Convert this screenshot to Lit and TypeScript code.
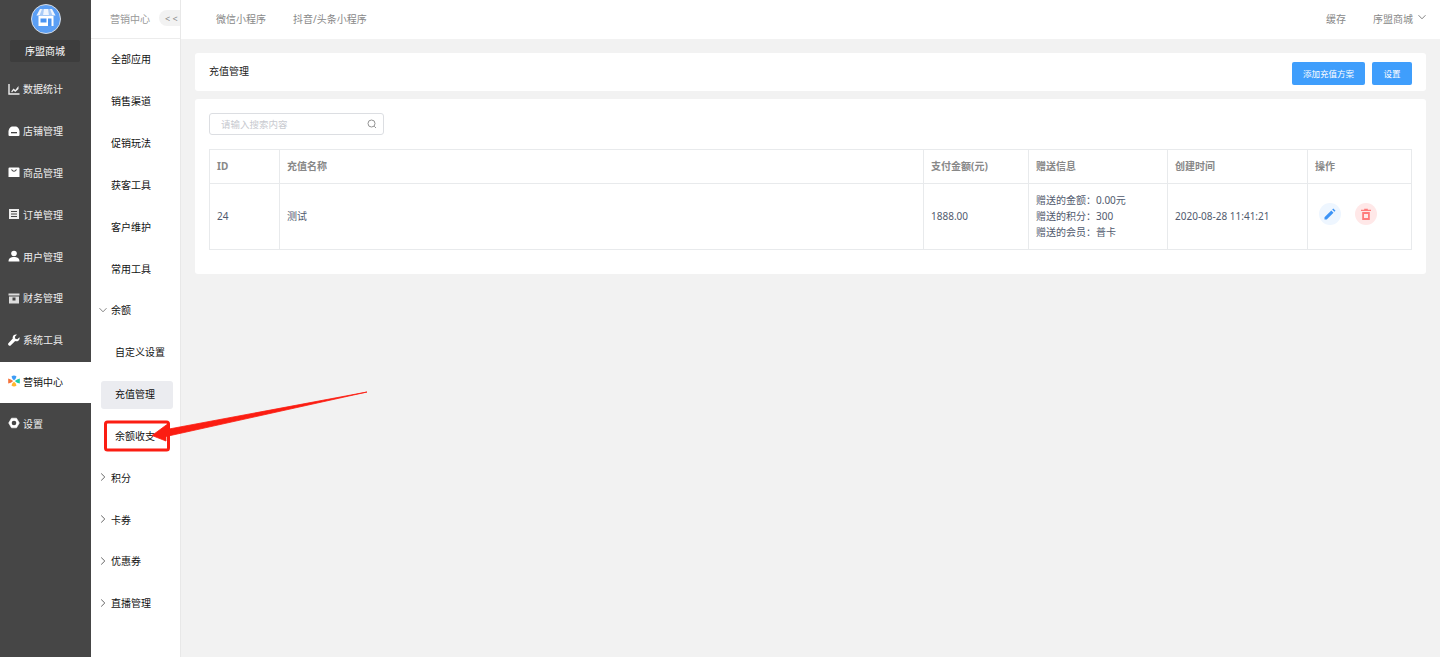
import { LitElement, html, css, svg } from "lit";
import { customElement } from "lit/decorators.js";

const icons: Record<string, any> = {
  stats: svg`<path d="M1 1V11h10.500" fill="none" stroke="#eee" stroke-width="1.400"/><path d="M3.200 8.500 5.500 5.500l1.800 1.500 3.200-4v3L7.300 9 5.500 7.500 4 9.500z" fill="#eee"/>`,
  shop: svg`<path d="M3.800 1.500h4.400c2 .8 3.300 2.800 3.300 5V10a1 1 0 0 1-1 1H1.500a1 1 0 0 1-1-1V6.500c0-2.200 1.300-4.200 3.300-5z" fill="#fff"/><rect x="3" y="7" width="6" height="1.300" fill="#464646"/>`,
  goods: svg`<path d="M1.500 1.500h9a1 1 0 0 1 1 1v8.500H.5V2.500a1 1 0 0 1 1-1z" fill="#fff"/><path d="M3.500 3.500q2.500 3.500 5 0" fill="none" stroke="#464646" stroke-width="1.200"/>`,
  order: svg`<path d="M1 1h10v10H1z" fill="#eee"/><path d="M3 3.500h6M3 6h6M3 8.500h6" stroke="#464646" stroke-width="1.100"/>`,
  user: svg`<circle cx="6" cy="3.500" r="2.800" fill="#fff"/><path d="M.5 11.500c0-3.500 2.500-4.500 5.500-4.500s5.500 1 5.500 4.500z" fill="#fff"/>`,
  finance: svg`<path d="M.5 1.500h11v2H.5z" fill="#ddd"/><path d="M1 4.500h10v7H1z" fill="#ddd"/><rect x="4.500" y="5.500" width="3" height="3" fill="#464646"/>`,
  tool: svg`<path d="M11.500 3.200 9.300 5.200 7.300 4.700 6.900 2.700 9 .6C7.300 0 5.300.9 4.800 2.700c-.2.700-.2 1.300 0 1.900L.6 8.900c-.7.700-.7 1.700 0 2.400s1.700.7 2.300 0l4.300-4.200c2.500.8 5.100-1.300 4.300-3.900z" fill="#fff"/>`,
  gear: svg`<path d="M3.500 1.200h5L11.300 6 8.500 10.800h-5L.7 6z" fill="#fff" stroke="#fff" stroke-width=".6" stroke-linejoin="round"/><circle cx="6" cy="6" r="2.300" fill="#464646"/>`,
  market: svg`<path d="M3.500 1.500Q6-.5 8.500 1.500 8 4 6 5.300 4 4 3.500 1.500z" fill="#3d9cf5"/><path d="M11.800 3.400v5.200Q9 8 6.800 6 9 4 11.800 3.400z" fill="#19cba8"/><path d="M3.500 10.500Q6 12.500 8.500 10.500 8 8 6 6.700 4 8 3.500 10.500z" fill="#ffb62e"/><path d="M.2 3.400v5.200Q3 8 5.200 6 3 4 .2 3.400z" fill="#f4733b"/>`,
};

const mainMenu = [
  ["数据统计", "stats"], ["店铺管理", "shop"], ["商品管理", "goods"], ["订单管理", "order"],
  ["用户管理", "user"], ["财务管理", "finance"], ["系统工具", "tool"], ["营销中心", "market"], ["设置", "gear"],
];

const chevDown = html`<svg class="chev" viewBox="0 0 10 10" width="10" height="10"><path d="M1.500 3.200 5 6.800l3.500-3.600" fill="none" stroke="#777" stroke-width=".9"/></svg>`;
const chevRight = html`<svg class="chev" viewBox="0 0 10 10" width="10" height="10"><path d="M3.200 1.500 6.800 5 3.200 8.500" fill="none" stroke="#666" stroke-width="1"/></svg>`;

@customElement("app-root")
export class AppRoot extends LitElement {
  static styles = css`
    :host { display: block; width: 1440px; height: 657px; overflow: hidden; position: relative; background: #f2f2f2;
      font-family: "Noto Sans", "Noto Sans CJK SC", "Liberation Sans", sans-serif; font-size: 10px; color: #515a6e; }
    * { box-sizing: border-box; }
    .app { display: flex; height: 657px; }
    .rail { width: 91px; flex: none; background: #464646; color: #fff; display: flex; flex-direction: column; }
    .brand { display: flex; flex-direction: column; align-items: center; padding-top: 4px; height: 69px; }
    .logo { width: 30px; height: 30px; display: block; }
    .brand-name { margin-top: 6px; margin-left: -1px; width: 70px; height: 22px; border-radius: 2px; background: #3d3d3d; display: flex; align-items: center; justify-content: center; color: #fff; padding-bottom: 2px; }
    .rail-item { height: 41.800px; display: flex; align-items: center; gap: 3px; padding: 0 0 2px 8px; color: #eee; }
    .rail-item.active { background: #fff; color: #111; }
    .rail-item svg { width: 12px; height: 12px; flex: none; }
    .sub { width: 90px; flex: none; background: #fff; border-right: 1px solid #e8e8e8; display: flex; flex-direction: column; position: relative; }
    .sub-head { height: 39px; flex: none; border-bottom: 1px solid #ececec; display: flex; align-items: center; padding: 0 0 2px 19px; color: #999; gap: 9px; overflow: hidden; }
    .sub-head .t { flex: none; white-space: nowrap; }
    .collapse { width: 21px; height: 16px; flex: none; border-radius: 8px 0 0 8px; background: #f2f2f2; color: #888; display: flex; align-items: center; padding-left: 6px; font-size: 9px; white-space: nowrap; }
    .sub-list { display: flex; flex-direction: column; }
    .sub-item { height: 41.840px; display: flex; align-items: center; padding: 0 0 2px 20px; color: #111; position: relative; flex: none; }
    .sub-item .chev { position: absolute; left: 7px; top: 50%; margin-top: -6px; }
    .sub-item.child { padding-left: 24px; }
    .sub-item.selected::before { content: ""; position: absolute; left: 10px; top: 7.500px; width: 72px; height: 28px; border-radius: 3px; background: #ebecf0; }
    .sub-item span { position: relative; }
    .main { flex: 1; min-width: 0; display: flex; flex-direction: column; }
    .top { height: 39px; flex: none; background: #fff; display: flex; align-items: center; padding: 0 13px 2px 35px; color: #888; }
    .top .tabs { display: flex; gap: 27px; }
    .top .right { margin-left: auto; display: flex; align-items: center; }
    .top .cache { margin-right: 27px; }
    .top .chev { margin-left: 4px; margin-top: -3px; }
    .content { padding: 14px 0 0 14px; display: flex; flex-direction: column; gap: 8px; margin-right: 14px; }
    .title-card { height: 38px; background: #fff; border-radius: 3px; display: flex; align-items: center; padding: 0 14px; color: #222; }
    .title-card > span { padding-bottom: 3px; }
    .btns { margin-left: auto; display: flex; gap: 7px; padding-top: 2px; }
    .btn { height: 23px; background: #3f9efc; color: #fff; border-radius: 2px; display: flex; align-items: center; justify-content: center; font-size: 8.500px; }
    .btn.wide { width: 73px; } .btn.narrow { width: 40px; }
    .card { background: #fff; border-radius: 3px; height: 175px; padding: 14px 14px 0; }
    .search { width: 175px; height: 22px; border: 1px solid #dcdee2; border-radius: 3px; display: flex; align-items: center; padding: 0 6px 0 11px; color: #c8cad0; font-size: 9.500px; }
    .search svg { margin-left: auto; }
    .search span { padding-bottom: 1px; }
    table { margin-top: 14px; width: 1203px; border-collapse: collapse; table-layout: fixed; color: #515a6e; }
    th, td { border: 1px solid #e8eaec; padding: 0 7px 2px; text-align: left; font-weight: 400; }
    th { height: 34px; color: #888; font-weight: 700; }
    td { height: 66px; line-height: 16px; }
    .ops { display: flex; align-items: center; gap: 14px; padding: 0 4px 3px; }
    .op { width: 22px; height: 22px; border-radius: 50%; display: flex; align-items: center; justify-content: center; }
    .op.edit { background: #eef6ff; } .op.del { background: #ffe8e8; }
    .overlay { position: absolute; left: 0; top: 0; pointer-events: none; }
  `;

  render() {
    const subs = ["全部应用", "销售渠道", "促销玩法", "获客工具", "客户维护", "常用工具"];
    return html`
      <div class="app">
        <aside class="rail">
          <div class="brand">
            <svg class="logo" viewBox="0 0 30 30">
              <circle cx="15" cy="15" r="14.500" fill="#5b9ff5" stroke="#d5dbe3" stroke-width="1"/>
              <path d="M9 5h12l3.500 6.500h-19z" fill="#f0f5fd"/>
              <path d="M11 5h2l-1 6.500H8.500zM17 5h2l2.500 6.500H18z" fill="#a9cbf7"/>
              <path d="M7.500 12h15v10h-15z" fill="#fff"/>
              <rect x="9.500" y="14.500" width="6" height="4" fill="#4a94f2"/>
              <rect x="17" y="14.500" width="3.500" height="7.500" fill="#4a94f2"/>
            </svg>
            <div class="brand-name">序盟商城</div>
          </div>
          ${mainMenu.map(([label, ic]) => html`
            <div class="rail-item ${label === "营销中心" ? "active" : ""}">
              <svg viewBox="0 0 12 12">${icons[ic]}</svg><span>${label}</span>
            </div>`)}
        </aside>
        <nav class="sub">
          <div class="sub-head"><span class="t">营销中心</span><span class="collapse">&lt; &lt;</span></div>
          <div class="sub-list">
            ${subs.map((s) => html`<div class="sub-item"><span>${s}</span></div>`)}
            <div class="sub-item">${chevDown}<span>余额</span></div>
            <div class="sub-item child"><span>自定义设置</span></div>
            <div class="sub-item child selected"><span>充值管理</span></div>
            <div class="sub-item child"><span>余额收支</span></div>
            <div class="sub-item">${chevRight}<span>积分</span></div>
            <div class="sub-item">${chevRight}<span>卡券</span></div>
            <div class="sub-item">${chevRight}<span>优惠券</span></div>
            <div class="sub-item">${chevRight}<span>直播管理</span></div>
          </div>
        </nav>
        <main class="main">
          <header class="top">
            <div class="tabs"><span>微信小程序</span><span>抖音/头条小程序</span></div>
            <div class="right"><span class="cache">缓存</span><span>序盟商城</span>${chevDown}</div>
          </header>
          <div class="content">
            <div class="title-card">
              <span>充值管理</span>
              <div class="btns"><div class="btn wide">添加充值方案</div><div class="btn narrow">设置</div></div>
            </div>
            <div class="card">
              <div class="search">
                <span>请输入搜索内容</span>
                <svg viewBox="0 0 10 10" width="10" height="10"><circle cx="4.500" cy="4.500" r="3.500" fill="none" stroke="#888" stroke-width=".9"/><path d="M7.200 7.200 9 9" stroke="#888" stroke-width=".9"/></svg>
              </div>
              <table>
                <colgroup><col style="width:70px"/><col style="width:644px"/><col style="width:105px"/><col style="width:139px"/><col style="width:140px"/><col style="width:104px"/></colgroup>
                <thead><tr><th>ID</th><th>充值名称</th><th>支付金额(元)</th><th>赠送信息</th><th>创建时间</th><th>操作</th></tr></thead>
                <tbody><tr>
                  <td>24</td><td>测试</td><td>1888.00</td>
                  <td>赠送的金额：0.00元<br/>赠送的积分：300<br/>赠送的会员：普卡</td>
                  <td>2020-08-28 11:41:21</td>
                  <td><div class="ops">
                    <div class="op edit"><svg viewBox="0 0 12 12" width="12" height="12"><path d="M.5 11.500V9.300L7.300 2.500l2.200 2.200-6.800 6.800zM8.200 1.600 9.300.5l2.200 2.200-1.100 1.100z" fill="#3d94f6"/></svg></div>
                    <div class="op del"><svg viewBox="0 0 12 12" width="12" height="12"><path d="M4.200.8h3.600v1H11v1.200H1V1.800h3.200z" fill="#ff7b7b"/><path fill-rule="evenodd" d="M2.200 4h7.600v8H2.200zM4 6v4h4V6z" fill="#ff7b7b"/></svg></div>
                  </div></td>
                </tr></tbody>
              </table>
            </div>
          </div>
        </main>
      </div>
      <svg class="overlay" width="1440" height="657" viewBox="0 0 1440 657">
        <rect x="105.500" y="422" width="63" height="28" rx="2" fill="none" stroke="#fb1d12" stroke-width="3"/>
        <path d="M367 392 169 429l0-6-17 12.500 14 5.500 0-4.500z" fill="#fb1d12" stroke="#fb1d12" stroke-width=".8" stroke-linejoin="round"/>
      </svg>
    `;
  }
}
